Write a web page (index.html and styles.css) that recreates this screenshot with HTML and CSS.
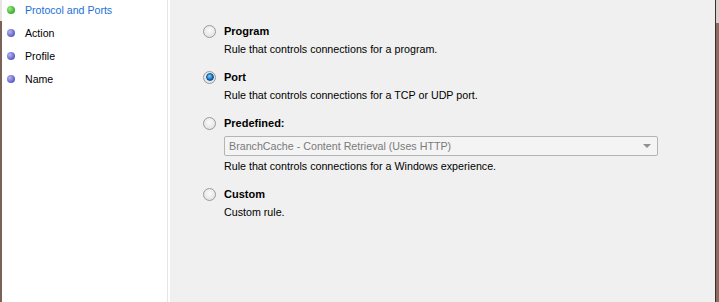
FILE: index.html
```html
<!doctype html>
<html>
	<head>
		<meta charset="UTF-8">
		<title>New Inbound Rule Wizard</title>
		<link rel="stylesheet" href="styles.css">
	</head>
	<body>
		<div class="frame">
			<div class="edge-left"><div class="edge-top"></div><div class="edge-rest"></div></div>
			<ul class="steps">
				<li class="step current"><span class="dot green"></span>Protocol and Ports</li>
				<li class="step"><span class="dot"></span>Action</li>
				<li class="step"><span class="dot"></span>Profile</li>
				<li class="step"><span class="dot"></span>Name</li>
			</ul>
			<div class="divider"></div>
			<div class="content">
				<div class="option">
					<label class="opt-head"><span class="radio"></span>Program</label>
					<p class="desc">Rule that controls connections for a program.</p>
				</div>
				<div class="option">
					<label class="opt-head"><span class="radio checked"></span>Port</label>
					<p class="desc">Rule that controls connections for a TCP or UDP port.</p>
				</div>
				<div class="option">
					<label class="opt-head"><span class="radio"></span>Predefined:</label>
					<div class="combo"><span>BranchCache - Content Retrieval (Uses HTTP)</span><span class="arrow"></span></div>
					<p class="desc">Rule that controls connections for a Windows experience.</p>
				</div>
				<div class="option">
					<label class="opt-head"><span class="radio"></span>Custom</label>
					<p class="desc">Custom rule.</p>
				</div>
			</div>
			<div class="edge-right"><div class="line"></div><div class="strip"><div class="edge-top2"></div><div class="edge-rest2"></div></div></div>
		</div>
	</body>
</html>
```

FILE: styles.css
```css
html,body{margin:0;padding:0}
body{
	width:719px;
	height:302px;
	overflow:hidden;
	font-family:"Liberation Sans",sans-serif;
	font-size:10.7px;
	color:#000;
	background:#f0f0f0
}
.frame{display:flex;height:302px}
.edge-left{width:2px;display:flex;flex-direction:column}
.edge-top{height:21px;background:#e8e4e2}
.edge-rest{flex:1;background:#7a6356}
.steps{
	list-style:none;
	margin:0;
	padding:0 0 0 5px;
	width:160px;
	background:#fff
}
.step{display:flex;align-items:center;height:23px;padding-bottom:3px;box-sizing:border-box;font-size:10.6px}
.step.current{color:#1a6fd6}
.dot{
	width:8px;height:8px;border-radius:50%;
	margin:0 10px 0 0;
	background:radial-gradient(circle at 35% 35%,#b5b5f0,#5d5dc6 70%)
}
.dot.green{background:radial-gradient(circle at 35% 35%,#9fe88a,#3aae2a 70%)}
.divider{width:3px;background:#fff;border-left:1px solid #e6e6e6;box-sizing:border-box}
.content{flex:1;padding:23px 0 0 33px}
.option{margin-bottom:12px}
.opt-head{display:flex;align-items:center;font-weight:bold;font-size:11px;height:16px}
.radio{
	width:11px;height:11px;border-radius:50%;
	border:1px solid #9a9a9a;
	margin-right:8px;
	background:radial-gradient(circle at 50% 40%,#fbfbfb,#dcdcdc);
	box-sizing:content-box;
	display:flex;align-items:center;justify-content:center
}
.radio.checked::after{
	content:"";
	width:6px;height:6px;border-radius:50%;
	background:radial-gradient(circle at 40% 35%,#7fd0ff,#0b64b8 70%);
	border:1px solid #0c4f8f
}
.desc{margin:2px 0 0 21px;line-height:16px}
.combo{
	display:flex;align-items:center;justify-content:space-between;
	width:434px;height:20px;
	margin:5px 0 0 21px;
	border:1px solid #b2b6b8;border-radius:2px;
	background:#f4f4f4;color:#7a7a7a;
	padding:0 4px;
	box-sizing:border-box
}
.arrow{width:0;height:0;border-left:4px solid transparent;border-right:4px solid transparent;border-top:4px solid #909090;margin-right:2px}
.edge-right{width:4px;display:flex}
.line{width:1px;background:#3b302c}
.strip{flex:1;display:flex;flex-direction:column}
.edge-top2{height:23px;background:#d9d1cc}
.edge-rest2{flex:1;background:#8a6f60}
```
